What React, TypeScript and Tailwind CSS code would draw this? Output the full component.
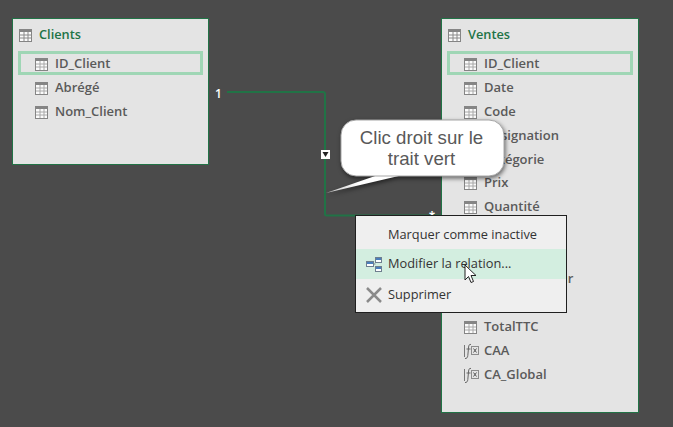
const font = "font-['Open_Sans','Noto_Sans',sans-serif]";

function GridIcon({ header }: { header?: boolean }) {
  return (
    <svg width="13" height="13" viewBox="0 0 13 13" className="shrink-0">
      <rect x="0" y="0" width="13" height="13" fill="#858585" />
      <rect x="1" y="3" width="11" height="9" fill="#fbfbfb" />
      <path d="M5 3v9M9 3v9M1 6h11M1 9h11" stroke={header ? "#8a8a8a" : "#a8a8a8"} strokeWidth="1" />
    </svg>
  );
}

function FxIcon() {
  return (
    <svg width="16" height="17" viewBox="0 0 16 17" fill="none" className="-ml-[1px] -mr-[2px] shrink-0">
      <path d="M1.500 2v12" stroke="#777" />
      <path d="M8 1.500C6.500 1 5.800 2 5.600 4L4.800 12.500c-.2 2-1 3.200-2.800 3M3.500 6h4" stroke="#666" />
      <rect x="8.500" y="3.500" width="7" height="8" stroke="#8c8c8c" />
      <path d="M10.500 5.500l3 4M13.500 5.500l-3 4" stroke="#555" />
    </svg>
  );
}

type RowData = { label: string; fx?: boolean; active?: boolean; tight?: boolean };

function Row({ label, fx, active, tight }: RowData) {
  return (
    <div
      className={`flex items-center gap-[7px] pt-[2px] text-[13px] font-semibold text-[#5a5a5a] ${tight ? "h-[23px]" : "h-6"} ${
        active ? "border-[3px] border-[#9fd6b5] pl-[14px]" : "pl-[17px]"
      }`}
    >
      {fx ? <FxIcon /> : <GridIcon />}
      <span className="whitespace-nowrap">{label}</span>
    </div>
  );
}

function TableCard({ title, rows, className }: { title: string; rows: RowData[]; className: string }) {
  return (
    <div className={`absolute border border-[#217346] bg-[#e4e4e4] ${className}`}>
      <div className="flex h-[32px] items-center gap-[7px] pl-[6px] text-[12.750px] font-semibold text-[#217346]">
        <GridIcon header />
        <span>{title}</span>
      </div>
      <div className="mx-[5px]">
        {rows.map((r, i) => (
          <Row key={i} {...r} />
        ))}
      </div>
    </div>
  );
}

const ventes: RowData[] = [
  { label: "ID_Client", active: true },
  { label: "Date" },
  { label: "Code" },
  { label: "Désignation" },
  { label: "Catégorie", tight: true },
  { label: "Prix" },
  { label: "Quantité" },
  { label: "" },
  { label: "" },
  { label: "Nom_Vendeur" },
  { label: "" },
  { label: "TotalTTC" },
  { label: "CAA", fx: true },
  { label: "CA_Global", fx: true },
];

export default function App() {
  return (
    <div className={`relative h-[427px] w-[673px] overflow-hidden bg-[#4b4b4b] ${font}`}>
      <TableCard
        title="Clients"
        className="left-[12px] top-[18px] h-[147px] w-[197px]"
        rows={[{ label: "ID_Client", active: true }, { label: "Abrégé" }, { label: "Nom_Client" }]}
      />
      <TableCard title="Ventes" className="left-[441px] top-[18px] h-[395px] w-[198px]" rows={ventes} />

      {/* relation line */}
      <svg width="673" height="427" className="absolute left-0 top-0">
        <path d="M227 92h96q2 0 2 2v120q0 1.500 2 1.500h115" fill="none" stroke="#217346" strokeWidth="2" />
        <rect x="321" y="150" width="9" height="9" fill="#fff" />
        <path d="M322.500 152h6l-3 5z" fill="#222" />
      </svg>
      <span className="absolute left-[215px] top-[86px] text-[12px] font-semibold leading-[15px] text-white">1</span>
      <span className="absolute left-[429px] top-[209px] text-[11px] font-bold leading-[11px] text-white">*</span>

      {/* callout */}
      <svg width="673" height="427" className="absolute left-0 top-0 drop-shadow-[1px_2px_2px_rgba(0,0,0,0.55)]">
        <defs>
          <linearGradient id="tail" gradientUnits="userSpaceOnUse" x1="327" y1="192" x2="385" y2="176">
            <stop offset="0" stopColor="#c4c4c4" />
            <stop offset="0.55" stopColor="#ffffff" />
          </linearGradient>
        </defs>
        <path d="M326 193L378 175H403z" fill="url(#tail)" />
        <rect x="341" y="120" width="163" height="56" rx="15" fill="#fff" stroke="#a6a6a6" strokeWidth="1" />
      </svg>
      <div className="absolute left-[340px] top-[120px] flex h-[56px] w-[163px] flex-col items-center justify-center font-['Liberation_Sans',sans-serif] text-[18.670px] leading-[21px] text-[#595959]">
        <span>Clic droit sur le</span>
        <span>trait vert</span>
      </div>

      {/* context menu */}
      <div className="absolute left-[355px] top-[215px] flex h-[98px] w-[212px] flex-col border border-[#1f1f1f] bg-[#efefef] pb-[3px] pt-[4px] text-[12.800px] text-[#333]">
        <div className="flex h-[29px] items-center pl-[32px]">Marquer comme inactive</div>
        <div className="flex h-[30px] items-center gap-[6px] bg-[#d3eee0] pl-[10px]">
          <svg width="16" height="17" viewBox="0 0 16 17" className="shrink-0">
            <rect x="0.500" y="5.500" width="7" height="5" fill="#fff" stroke="#6f7f8f" />
            <rect x="1" y="6" width="6" height="2" fill="#4a7ebb" />
            <rect x="9.500" y="1.500" width="6" height="5" fill="#fff" stroke="#6f7f8f" />
            <rect x="10" y="2" width="5" height="2" fill="#4a7ebb" />
            <rect x="9.500" y="10.500" width="6" height="5" fill="#fff" stroke="#6f7f8f" />
            <rect x="10" y="11" width="5" height="2" fill="#4a7ebb" />
            <path d="M7.500 8H9.500" stroke="#6f7f8f" />
          </svg>
          <span>Modifier la relation...</span>
        </div>
        <div className="flex h-[30px] items-center gap-[6px] pl-[10px] pt-[1px]">
          <svg width="16" height="16" viewBox="0 0 16 16" className="shrink-0">
            <path d="M1 1l14 14M15 1L1 15" stroke="#8a8a8a" strokeWidth="2.500" />
          </svg>
          <span>Supprimer</span>
        </div>
      </div>

      {/* mouse cursor */}
      <svg width="13" height="20" viewBox="0 0 13 20" className="absolute left-[464px] top-[264px]">
        <path d="M1 1v15l3.500-3.500 2.500 6 2.500-1-2.500-6H12z" fill="#fff" stroke="#222" strokeWidth="1" />
      </svg>
    </div>
  );
}
